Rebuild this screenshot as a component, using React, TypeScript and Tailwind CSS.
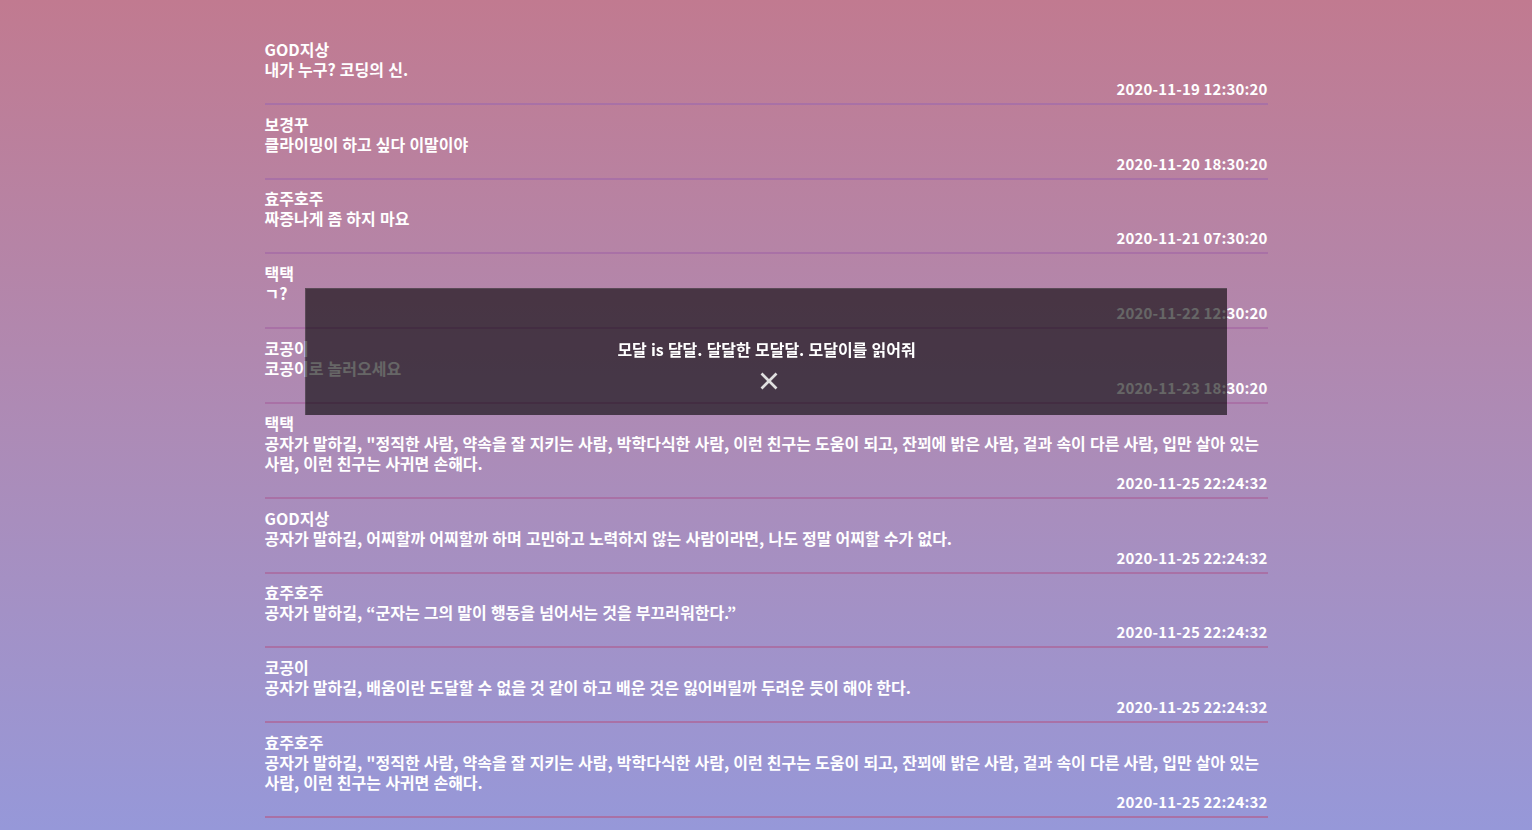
import React from 'react';

interface Comment {
  id: number;
  name: string;
  text: string;
  date: string;
}

const LONG =
  '공자가 말하길, "정직한 사람, 약속을 잘 지키는 사람, 박학다식한 사람, 이런 친구는 도움이 되고, 잔꾀에 밝은 사람, 겉과 속이 다른 사람, 입만 살아 있는 사람, 이런 친구는 사귀면 손해다.';

const comments: Comment[] = [
  { id: 1, name: 'GOD지상', text: '내가 누구? 코딩의 신.', date: '2020-11-19 12:30:20' },
  { id: 2, name: '보경꾸', text: '클라이밍이 하고 싶다 이말이야', date: '2020-11-20 18:30:20' },
  { id: 3, name: '효주호주', text: '짜증나게 좀 하지 마요', date: '2020-11-21 07:30:20' },
  { id: 4, name: '택택', text: 'ㄱ?', date: '2020-11-22 12:30:20' },
  { id: 5, name: '코공이', text: '코공이로 놀러오세요', date: '2020-11-23 18:30:20' },
  { id: 6, name: '택택', text: LONG, date: '2020-11-25 22:24:32' },
  {
    id: 7,
    name: 'GOD지상',
    text: '공자가 말하길, 어찌할까 어찌할까 하며 고민하고 노력하지 않는 사람이라면, 나도 정말 어찌할 수가 없다.',
    date: '2020-11-25 22:24:32',
  },
  {
    id: 8,
    name: '효주호주',
    text: '공자가 말하길, “군자는 그의 말이 행동을 넘어서는 것을 부끄러워한다.”',
    date: '2020-11-25 22:24:32',
  },
  {
    id: 9,
    name: '코공이',
    text: '공자가 말하길, 배움이란 도달할 수 없을 것 같이 하고 배운 것은 잃어버릴까 두려운 듯이 해야 한다.',
    date: '2020-11-25 22:24:32',
  },
  { id: 10, name: '효주호주', text: LONG, date: '2020-11-25 22:24:32' },
  { id: 11, name: '보경꾸', text: '클라이밍이 하고 싶다 이말이야', date: '2020-11-25 22:24:32' },
];

const CommentItem: React.FC<{ comment: Comment }> = ({ comment }) => (
  <li className="pt-[8.8px] pb-[4px] border-b-2 border-[#a971a6]">
    <p>{comment.name}</p>
    <p className="break-keep">{comment.text}</p>
    <p className="text-right text-[15px] tracking-[0.15px] [word-spacing:0px]">{comment.date}</p>
  </li>
);

const Modal: React.FC = () => (
  <div className="fixed left-[305px] top-[288px] w-[922px] h-[127px] bg-black/60 border-t border-l border-white/10 flex flex-col items-center pt-[50px]">
    <p className="text-white">모달 is 달달. 달달한 모달달. 모달이를 읽어줘</p>
    <button className="mt-[12px] ml-[4px] text-[#e0e0e0]" aria-label="close">
      <svg width="20" height="20" viewBox="0 0 20 20" fill="none" stroke="currentColor" strokeWidth="2.6">
        <line x1="2.5" y1="2.5" x2="17.5" y2="17.5" />
        <line x1="17.5" y1="2.5" x2="2.5" y2="17.5" />
      </svg>
    </button>
  </div>
);

export default function App() {
  return (
    <div className="h-screen overflow-hidden bg-linear-to-b from-[#c17a90] to-[#9698d9] font-['Noto_Sans_CJK_KR','Noto_Sans',sans-serif] font-semibold text-[16px] leading-[20px] [word-spacing:0.5px] text-white">
      <ul className="w-[1003px] mx-auto pt-[30px]">
        {comments.map((c) => (
          <CommentItem key={c.id} comment={c} />
        ))}
      </ul>
      <Modal />
    </div>
  );
}
